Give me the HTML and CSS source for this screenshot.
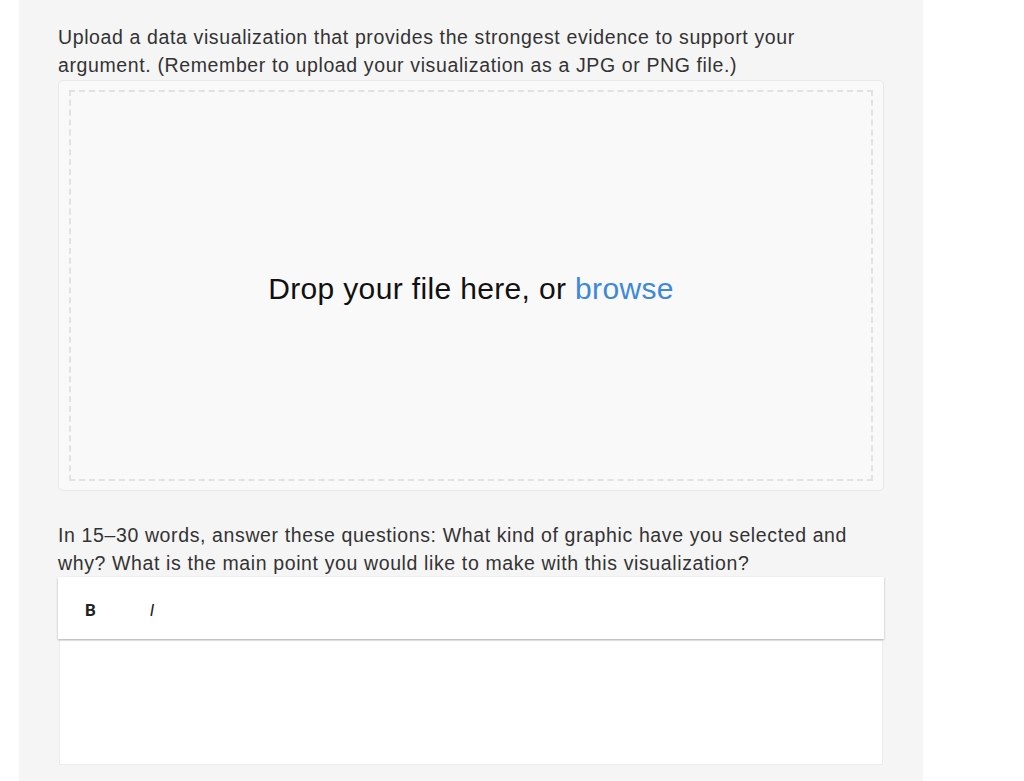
FILE: index.html
```html
<!DOCTYPE html>
<html>
<head>
<meta charset="utf-8">
<link rel="stylesheet" href="styles.css">
</head>
<body>
<main class="panel">
  <p class="question">Upload a data visualization that provides the strongest evidence to support your argument. (Remember to upload your visualization as a JPG or PNG file.)</p>
  <div class="dropzone">
    <div class="dropzone-inner">
      <span class="drop-text">Drop your file here, or <a class="browse">browse</a></span>
    </div>
  </div>
  <p class="question q2">In 15–30 words, answer these questions: What kind of graphic have you selected and why? What is the main point you would like to make with this visualization?</p>
  <div class="editor">
    <div class="toolbar">
      <button class="tool bold">B</button>
      <button class="tool italic">I</button>
    </div>
    <div class="editor-body"></div>
  </div>
</main>
</body>
</html>
```
FILE: styles.css
```css
html, body {
  margin: 0;
  padding: 0;
  background: #ffffff;
  height: 100%;
}
body {
  font-family: "Liberation Sans", Arial, sans-serif;
}
.panel {
  margin-left: 19px;
  width: 904px;
  min-height: 781px;
  background: #f5f5f5;
  box-sizing: border-box;
  padding: 23px 39px 16px 39px;
}
.question {
  margin: 0;
  font-size: 19.5px;
  line-height: 28px;
  letter-spacing: 0.62px;
  color: #333333;
  max-width: 800px;
}
.dropzone {
  margin-top: 1px;
  height: 411px;
  border: 1px solid #e8e8e8;
  border-radius: 5px;
  background: #f9f9f9;
  padding: 9px 10px;
  box-sizing: border-box;
}
.dropzone-inner {
  height: 100%;
  border: 2px dashed #e2e2e2;
  box-sizing: border-box;
  display: flex;
  align-items: center;
  justify-content: center;
}
.drop-text {
  font-size: 30px;
  letter-spacing: 0.35px;
  color: #111111;
  margin-top: 6px;
}
.browse {
  color: #3d88da;
}
.q2 {
  margin-top: 30px;
}
.editor {
  margin-top: 0;
}
.toolbar {
  height: 62px;
  box-sizing: border-box;
  padding-top: 4px;
  background: #ffffff;
  box-shadow: 0 1px 2px rgba(0,0,0,0.3);
  display: flex;
  align-items: center;
  padding-left: 27px;
  gap: 54px;
  position: relative;
  z-index: 1;
}
.tool {
  border: none;
  background: none;
  padding: 0;
  font-family: "Roboto", "Liberation Sans", sans-serif;
  font-size: 17px;
  line-height: 20px;
  color: #222;
  cursor: pointer;
}
.bold { font-weight: 700; }
.italic { font-weight: 400; font-style: italic; }
.editor-body {
  margin: 2px 1px 0 1px;
  height: 124px;
  background: #ffffff;
  border: 1px solid #ececec;
  border-top: none;
  box-sizing: border-box;
}
```
